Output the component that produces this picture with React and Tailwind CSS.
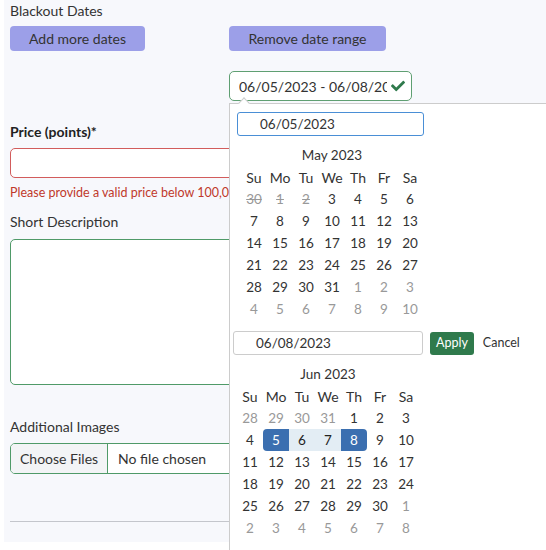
import { FaCheck } from "react-icons/fa";

const font = { fontFamily: '"Lato", "Noto Sans", sans-serif' };

const DAYS = ["Su", "Mo", "Tu", "We", "Th", "Fr", "Sa"];

const may = [
  ["30", "1", "2", "3", "4", "5", "6"],
  ["7", "8", "9", "10", "11", "12", "13"],
  ["14", "15", "16", "17", "18", "19", "20"],
  ["21", "22", "23", "24", "25", "26", "27"],
  ["28", "29", "30", "31", "1", "2", "3"],
  ["4", "5", "6", "7", "8", "9", "10"],
];

const jun = [
  ["28", "29", "30", "31", "1", "2", "3"],
  ["4", "5", "6", "7", "8", "9", "10"],
  ["11", "12", "13", "14", "15", "16", "17"],
  ["18", "19", "20", "21", "22", "23", "24"],
  ["25", "26", "27", "28", "29", "30", "1"],
  ["2", "3", "4", "5", "6", "7", "8"],
];

// cell state for each month: "off" (other month), "dis" (disabled, struck), "start", "end", "range"
const mayState = (r, c) => {
  if (r === 0 && c < 3) return "dis";
  if ((r === 4 && c > 3) || r === 5) return "off";
  return "";
};

const junState = (r, c) => {
  if ((r === 0 && c < 4) || (r === 4 && c === 6) || r === 5) return "off";
  if (r === 1 && c === 1) return "start";
  if (r === 1 && c === 4) return "end";
  if (r === 1 && (c === 2 || c === 3)) return "range";
  return "";
};

const cellClass = {
  "": "text-[#333]",
  off: "text-[#999]",
  dis: "text-[#999] line-through",
  start: "bg-[#3b6fb0] text-white rounded-l-[4px]",
  end: "bg-[#3b6fb0] text-white rounded-r-[4px]",
  range: "bg-[#e3edf4] text-[#222]",
};

const Month = ({ title, rows, state }) => (
  <div className="w-[182px]">
    <div className="text-center text-[13.5px] text-[#333] h-[22px] leading-[22px]">{title}</div>
    <div className="grid grid-cols-7">
      {DAYS.map((d) => (
        <div key={d} className="h-[22px] flex items-center justify-center text-[14px] text-[#333]">
          {d}
        </div>
      ))}
      {rows.map((row, r) =>
        row.map((d, c) => (
          <div
            key={r + "-" + c}
            className={`h-[22px] flex items-center justify-center text-[13.5px] ${cellClass[state(r, c)]}`}
          >
            {d}
          </div>
        ))
      )}
    </div>
  </div>
);

const DatePopover = () => (
  <div className="absolute left-[229px] top-[103px] w-[330px] h-[460px] bg-white border-l border-t border-[#ccc]">
    {/* little arrow under the input */}
    <div className="absolute -top-[5px] left-[10px] w-[8px] h-[8px] bg-white border-l border-t border-[#ccc] rotate-45" />
    <div className="pl-[7px] pt-[8px]">
      <div className="w-[187px] h-[24px] border border-[#4a8fd6] rounded-[3px] pl-[22px] flex items-center text-[13.5px] text-[#333]">
        06/05/2023
      </div>
    </div>
    <div className="pl-[11px] pt-[8px]">
      <Month title="May 2023" rows={may} state={mayState} />
    </div>
    <div className="flex items-center pl-[3px] pt-[11px]">
      <div className="w-[190px] h-[24px] border border-[#ccc] rounded-[3px] pl-[22px] flex items-center text-[13.5px] text-[#333]">
        06/08/2023
      </div>
      <button className="ml-[7px] h-[23px] px-[6px] bg-[#2f7a4c] text-white text-[12.5px] rounded-[3px]">
        Apply
      </button>
      <span className="ml-[9px] text-[12.5px] text-[#333]">Cancel</span>
    </div>
    <div className="pl-[7px] pt-[8px]">
      <Month title="Jun 2023" rows={jun} state={junState} />
    </div>
  </div>
);

export default function App() {
  return (
    <div className="w-[546px] h-[550px] bg-white overflow-hidden relative" style={font}>
      <div className="ml-[4px] h-[542px] bg-[#f7f8fc] pl-[6px] pr-[8px] text-[#333]">
        <div className="pt-[2px] h-[20px] text-[14px] leading-[18px]">Blackout Dates</div>

        <div className="flex mt-[6px]">
          <div className="w-[219px]">
            <button className="h-[25px] w-[135px] bg-[#9c9fe8] rounded-[4px] text-[14px] text-[#333]">
              Add more dates
            </button>
          </div>
          <div className="flex flex-col">
            <button className="h-[25px] w-[157px] bg-[#9c9fe8] rounded-[4px] text-[14px] text-[#333]">
              Remove date range
            </button>
            <div className="mt-[20px] h-[30px] w-[183px] border border-[#5f9f72] rounded-[5px] bg-white flex items-center pl-[9px] pr-[6px]">
              <span className="text-[14px] text-[#333] whitespace-nowrap overflow-hidden w-[148px]">
                06/05/2023 - 06/08/2023
              </span>
              <FaCheck className="ml-auto text-[#2f7a4c]" size={14} />
            </div>
          </div>
        </div>

        <div className="mt-[22px] text-[14px] font-bold text-[#222] leading-[18px]">Price (points)*</div>
        <div className="mt-[7px] h-[30px] bg-white border border-[#d25c5c] rounded-[5px]" />
        <div className="mt-[7px] text-[12.5px] text-[#c0392b] leading-[16px] whitespace-nowrap">
          Please provide a valid price below 100,000
        </div>

        <div className="mt-[12px] text-[14px] leading-[18px]">Short Description</div>
        <div className="mt-[8px] h-[146px] bg-white border border-[#4f9a68] rounded-[5px]" />

        <div className="mt-[33px] text-[14px] leading-[18px]">Additional Images</div>
        <div className="mt-[7px] h-[31px] bg-white border border-[#4f9a68] rounded-[5px] flex items-center overflow-hidden">
          <div className="h-full px-[9px] flex items-center bg-[#f3f4f6] border-r border-[#4f9a68] text-[14px]">
            Choose Files
          </div>
          <div className="pl-[10px] text-[14px]">No file chosen</div>
        </div>

        <div className="mt-[47px] border-t border-[#c4c6cc]" />
      </div>
      <DatePopover />
    </div>
  );
}
